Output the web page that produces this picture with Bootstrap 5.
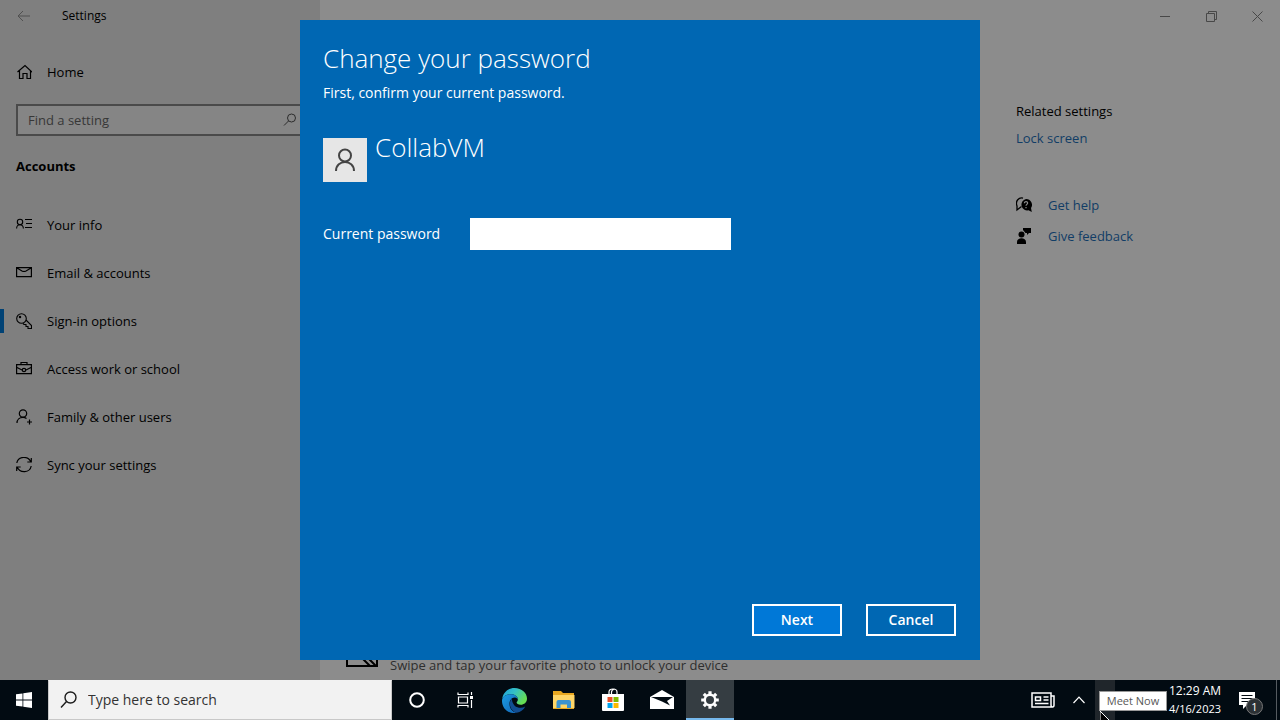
<!DOCTYPE html>
<html lang="en">
<head>
<meta charset="utf-8">
<meta name="viewport" content="width=device-width, initial-scale=1">
<title>Settings</title>
<link href="https://cdn.jsdelivr.net/npm/bootstrap@5.3.0/dist/css/bootstrap.min.css" rel="stylesheet">
<style>
  body { font-family: "Open Sans", "Noto Sans", sans-serif; font-size: 13px; line-height: 20px; color: #000; background: #8c8c8c; }
  svg { display: block; flex: none; }
  button { color: inherit; }
  a { text-decoration: none; }

  /* Settings window */
  .side-pane { width: 320px; flex: none; background: #7f7f7f; }
  .title-row { height: 32px; font-size: 12px; }
  .plain-btn { background: none; border: 0; padding: 0; }
  .back-btn { margin-left: 17px; margin-right: 31px; }
  .win-btn { width: 46px; height: 32px; color: #484848; }
  .find-box { height: 32px; border: 2px solid #4a4a4a; background: #858585; padding: 0 5px 0 10px; }
  .find-box input { background: none; border: 0; outline: 0; min-width: 0; padding: 0; color: #000; }
  .find-box input::placeholder { color: #373737; opacity: 1; }
  .side-head { font-size: 13px; line-height: 20px; font-weight: 700; margin: 20px 16px 25px; }
  .side-link { height: 48px; padding-left: 16px; gap: 15px; color: #000; position: relative; }
  .side-link.active::before { content: ""; position: absolute; left: 0; top: 12px; width: 4px; height: 24px; background: #004275; }
  .related { width: 264px; flex: none; padding-top: 69px; }
  .related a { color: #113d66; }
  .related .lock-link { margin: 7px 0 47px; }
  .related .help-link { margin-bottom: 11px; }
  .option-row { padding: 0 0 5px 26px; gap: 12px; color: #2e2e2e; }

  /* Password dialog */
  .dialog-layer { inset: 0; padding: 20px; }
  .pw-dialog { width: 680px; max-width: 100%; background: #0067b3; color: #fff; padding: 20px 24px 24px 23px; font-size: 14px; }
  .pw-dialog h1, .user-name { font-size: 26px; line-height: 36px; font-weight: 300; margin: 0; }
  .pw-dialog p { margin: 7px 0 26px; }
  .user-row { margin-bottom: 36px; }
  .avatar { width: 44px; height: 44px; background: #e6e6e6; margin-top: 9px; }
  .pw-label { width: 147px; }
  .pw-input { width: 261px; height: 32px; border: 0; border-radius: 0; background: #fff; padding: 4px 8px; }
  .dlg-btn { width: 90px; height: 32px; border: 2px solid #fff; border-radius: 0; color: #fff; font-size: 14px; font-weight: 600; line-height: 20px; padding: 0; background: #0067b3; }
  .dlg-btn.go { background: #0078d7; }

  /* Taskbar */
  .taskbar { height: 40px; background: #020b12; color: #fff; flex: none; }
  .task-btn { width: 49px; height: 40px; display: flex; align-items: center; justify-content: center; flex: none; }
  .task-btn.start { width: 48px; }
  .task-btn.current { width: 48px; background: #353d42; border-bottom: 2px solid #76b9ed; padding-top: 2px; }
  .task-search { width: 344px; background: #f2f2f2; border: 1px solid #c8c8c8; border-top-color: #f2f2f2; padding-left: 11px; gap: 10px; }
  .task-search input { background: none; border: 0; outline: 0; font-size: 14px; min-width: 0; color: #222; }
  .task-search input::placeholder { color: #333; opacity: 1; }
  .tray-btn { width: 32px; height: 40px; }
  .clock { font-size: 12px; line-height: 18px; text-align: center; width: 60px; margin-left: 50px; white-space: nowrap; }
  .clock .day { font-size: 11px; }
  .meet { width: 20px; height: 40px; background: #20262b; position: relative; }
  .tip { position: absolute; left: 4px; top: 11px; width: 68px; height: 20px; background: #fff; border: 1px solid #999; color: #575757; font-size: 11px; line-height: 18px; text-align: center; white-space: nowrap; }
  .pointer { position: absolute; left: 5px; top: 31px; }
  .note { position: relative; width: 44px; height: 40px; }
  .note-count { position: absolute; left: 21px; top: 18px; width: 17px; height: 17px; border: 1px solid #777; border-radius: 50%; background: #2c3135; font-size: 11px; line-height: 15px; text-align: center; }
  .edge-strip { width: 4px; margin-left: 7px; border-left: 1px solid #555b60; height: 40px; }
</style>
</head>
<body class="d-flex flex-column min-vh-100">

<div class="position-relative d-flex flex-grow-1">
  <aside class="side-pane d-flex flex-column">
    <div class="title-row d-flex align-items-center">
      <button class="plain-btn back-btn" aria-label="Back">
        <svg width="14" height="12" fill="none" stroke="#505050"><path d="M13 6H1M6 1L1 6l5 5"/></svg>
      </button>
      <span>Settings</span>
    </div>
    <a href="#" class="side-link d-flex align-items-center mt-3 mb-1">
      <svg width="16" height="16" fill="none" stroke="#000" stroke-width="1.2"><path d="M1.500 8L9 1.500 16 8M3.500 6.500v8h3.500v-5h4v5h3.500v-8"/></svg>
      Home
    </a>
    <div class="find-box d-flex align-items-center mx-3 mt-1">
      <input type="search" class="flex-grow-1" placeholder="Find a setting" aria-label="Find a setting">
      <svg width="14" height="14" fill="none" stroke="#2c2c2c"><circle cx="8.500" cy="5" r="4"/><path d="M5.500 8L1 12.500"/></svg>
    </div>
    <h2 class="side-head" id="acc">Accounts</h2>
    <nav class="d-flex flex-column" aria-labelledby="acc">
      <a href="#" class="side-link d-flex align-items-center">
        <svg width="16" height="16" fill="none" stroke="#000" stroke-width="1.1"><circle cx="4" cy="5" r="2.700"/><path d="M.6 11.500c0-5 6.800-5 6.800 0M9 2.500h7M10 6.500h6M9 10.500h7"/></svg>
        Your info</a>
      <a href="#" class="side-link d-flex align-items-center">
        <svg width="16" height="16" fill="none" stroke="#000" stroke-width="1.200"><path d="M.6 2.600h14.800v9H.6zM1 3l5 3q2 1 4 0l5-3"/></svg>
        Email &amp; accounts</a>
      <a href="#" class="side-link active d-flex align-items-center" aria-current="page">
        <svg width="16" height="17" fill="none" stroke="#000" stroke-width="1.100"><circle cx="5.500" cy="5.500" r="4.800"/><circle cx="4" cy="4" r=".7"/><path d="M10 7l5.500 5.500v3h-3.500v-2h-2v-2H8l-1-1"/></svg>
        Sign-in options</a>
      <a href="#" class="side-link d-flex align-items-center">
        <svg width="16" height="16" fill="none" stroke="#000" stroke-width="1.200"><path d="M.6 3.600h14.800v9H.6zM5 3.500v-2h6v2M1 6.500l5 2.500M15 6.500L10 9"/><circle cx="8" cy="9" r="1.700"/></svg>
        Access work or school</a>
      <a href="#" class="side-link d-flex align-items-center">
        <svg width="16" height="17" fill="none" stroke="#000" stroke-width="1.200"><circle cx="7" cy="4.500" r="3.700"/><path d="M1 14c0-3.500 2.500-5.700 6-5.700 1.500 0 2.500.4 3.500 1.200M13.500 10.500v5M11 13h5"/></svg>
        Family &amp; other users</a>
      <a href="#" class="side-link d-flex align-items-center">
        <svg width="16" height="16" fill="none" stroke="#000" stroke-width="1.200"><path d="M.8 6C2 -1 12 -1.500 15 5M15.200 9C14 16 4 16.500 1 10M15.300 1v4h-4M.7 14v-4h4"/></svg>
        Sync your settings</a>
    </nav>
  </aside>

  <main class="d-flex flex-column flex-grow-1">
    <div class="title-row d-flex justify-content-end">
      <button class="plain-btn win-btn d-flex align-items-center justify-content-center" aria-label="Minimize"><svg width="10" height="10" stroke="currentColor"><path d="M0 5.500h10"/></svg></button>
      <button class="plain-btn win-btn d-flex align-items-center justify-content-center" aria-label="Restore"><svg width="11" height="11" fill="none" stroke="currentColor"><path d="M.5 2.500h8v8h-8zM2.500 2.500v-2h8v8h-2"/></svg></button>
      <button class="plain-btn win-btn d-flex align-items-center justify-content-center" aria-label="Close"><svg width="11" height="11" stroke="currentColor"><path d="M.5.5l10 10M10.500.5l-10 10"/></svg></button>
    </div>
    <div class="d-flex flex-grow-1">
      <div class="d-flex flex-column justify-content-end flex-grow-1">
        <div class="option-row d-flex align-items-end">
          <svg width="32" height="24" fill="none" stroke="#000" stroke-width="2" class="mb-2"><path d="M1 1h30v22H1zM12 11l12 12M18 11l12 12"/></svg>
          <span>Swipe and tap your favorite photo to unlock your device</span>
        </div>
      </div>
      <div class="related">
        <div>Related settings</div>
        <a href="#" class="d-block lock-link">Lock screen</a>
        <a href="#" class="help-link d-flex align-items-center gap-3">
          <svg width="16" height="16"><path d="M5.500 9.500L1 13v-4C-1 4 3 0 7 1.200" fill="none" stroke="#000" stroke-width="1.300"/><path d="M10 2a5.800 5.800 0 0 1 5 9l.8 4-3.300-1.700A5.700 5.700 0 1 1 10 2z"/><path d="M8.400 6.200c0-2.200 3.400-2 3.200 0-.1 1.200-1.600 1.200-1.600 2.600M10 10v1.200" fill="none" stroke="#8c8c8c" stroke-width="1.200"/></svg>
          Get help</a>
        <a href="#" class="d-flex align-items-center gap-3">
          <svg width="16" height="16"><circle cx="5.500" cy="6.500" r="3"/><path d="M1 16v-2c0-5 9-5 9 0v2zM7 0h8v5h-2l-2 2V5H9.500L7 2z"/></svg>
          Give feedback</a>
      </div>
    </div>
  </main>

  <div class="dialog-layer position-absolute d-flex justify-content-center">
    <form class="pw-dialog d-flex flex-column" role="dialog" aria-labelledby="dlg-title">
      <h1 id="dlg-title">Change your password</h1>
      <p>First, confirm your current password.</p>
      <div class="user-row d-flex gap-2">
        <div class="avatar d-flex align-items-center justify-content-center">
          <svg width="22" height="24" fill="none" stroke="#444" stroke-width="2"><circle cx="11" cy="7.500" r="6"/><path d="M2 23c0-12 18-12 18 0"/></svg>
        </div>
        <div class="user-name">CollabVM</div>
      </div>
      <div class="d-flex align-items-center">
        <label for="cur" class="pw-label">Current password</label>
        <input id="cur" type="password" class="pw-input">
      </div>
      <div class="d-flex justify-content-end gap-4 mt-auto">
        <button type="button" class="dlg-btn go">Next</button>
        <button type="button" class="dlg-btn">Cancel</button>
      </div>
    </form>
  </div>
</div>

<footer class="taskbar d-flex align-items-center">
  <button class="plain-btn task-btn start" aria-label="Start"><svg width="16" height="16" fill="#fff"><path d="M0 2.300L6.500 1.400v6.200H0zM7.300 1.300L16 0v7.600H7.300zM0 8.400h6.500v6.200L0 13.700zM7.300 8.400H16V16l-8.700-1.300z"/></svg></button>
  <div class="task-search d-flex align-items-center h-100">
    <svg width="18" height="18" fill="none" stroke="#1c1c1c" stroke-width="1.400"><circle cx="10.500" cy="6.500" r="5.500"/><path d="M6.500 10.500L1 16.500"/></svg>
    <input type="search" class="flex-grow-1 p-0" placeholder="Type here to search" aria-label="Type here to search">
  </div>
  <button class="plain-btn task-btn" aria-label="Cortana"><svg width="16" height="16" fill="none" stroke="#fff" stroke-width="2"><circle cx="8" cy="8" r="6.800"/></svg></button>
  <button class="plain-btn task-btn" aria-label="Task view"><svg width="18" height="16" fill="none" stroke="#fff" stroke-width="1.200"><path d="M1 .5v2h10v-2M1 15.500v-2h10v2M1.500 5h9v6h-9zM14.500 0v3M14.500 8v8"/><path d="M13 4h3v3h-3z" fill="#fff" stroke="none"/></svg></button>
  <button class="plain-btn task-btn" aria-label="Edge">
    <svg width="25" height="25" viewBox="0 0 24 24">
      <defs>
        <linearGradient id="eg" x1="0" y1="0" x2="1" y2=".5"><stop offset="0" stop-color="#1c9fe0"/><stop offset=".5" stop-color="#35c1c4"/><stop offset="1" stop-color="#66dd53"/></linearGradient>
        <linearGradient id="eb" x1="0" y1="0" x2="1" y2="1"><stop offset="0" stop-color="#1b9de2"/><stop offset="1" stop-color="#1163b5"/></linearGradient>
      </defs>
      <path d="M.2 10.500C1 4.500 6 0 12 0c7 0 12 5 12 10 0 4-3 6-6 6-2.500 0-4-1-4-2 0-.8 1.200-1.200 1.200-3C15.200 8 12 6 8.500 6 4 6 1 8.500.2 10.500z" fill="url(#eg)"/>
      <path d="M.1 11C1 8 4.500 6 8.500 6c3.500 0 6.700 2 6.700 5 0 0-1-1.800-3-1.800-3 0-5 2.800-5 6C7.200 20 10 23 14 23.800 6 25.500-.8 19 .1 11z" fill="url(#eb)"/>
      <path d="M9.500 10.200C6 13 7 21.500 14 23.800c4-.6 7-3 8.300-6-5 3-12.500.5-12.800-7.600z" fill="#124e92"/>
    </svg></button>
  <button class="plain-btn task-btn" aria-label="File Explorer"><svg width="22" height="20"><path d="M0 1h8l2 2h11v16H0z" fill="#e9a820"/><path d="M0 5h21.500v13H0z" fill="#ffd667"/><path d="M3.500 18v-6q0-2 2-2h10.500q2 0 2 2v6h-4v-3.500H7.500V18z" fill="#3b93d0"/></svg></button>
  <button class="plain-btn task-btn" aria-label="Store"><svg width="24" height="24"><path d="M1 6h22v16q0 1-1 1H2q-1 0-1-1z" fill="#fff"/><path d="M8 8V4q0-3 4-3t4 3v4M10.500 6V4q0-2 3-3" fill="none" stroke="#fff" stroke-width="1.200"/><path d="M6.500 9h5v5h-5z" fill="#e8502a"/><path d="M12.500 9h5v5h-5z" fill="#7fba00"/><path d="M6.500 15h5v5h-5z" fill="#00a4ef"/><path d="M12.500 15h5v5h-5z" fill="#fdb900"/></svg></button>
  <button class="plain-btn task-btn" aria-label="Mail"><svg width="24" height="20"><path d="M0 7L12 0l12 7v12H0z" fill="#fff"/><path d="M1 7h22l-6 4 3 4.500-8-4z" fill="#020b12"/></svg></button>
  <button class="plain-btn task-btn current" aria-label="Settings"><svg width="18" height="18" viewBox="-9 -9 18 18" fill="none" stroke="#fff"><circle r="5.200" stroke-width="2.400"/><g stroke-width="3.200"><path d="M0-8.800v3M0 8.800v-3M-8.800 0h3M8.800 0h-3"/><path d="M-6.200-6.200l2 2M6.200 6.200l-2-2M-6.200 6.200l2-2M6.200-6.200l-2 2"/></g></svg></button>

  <div class="d-flex align-items-center ms-auto">
    <svg width="24" height="16" fill="none" stroke="#fff" stroke-width="1.500"><path d="M20 1H1v14h20.500q1.500 0 1.500-2V4h-3zM20 4v9q0 2 1.500 2M12.500 5h5M12.500 8h5M4 11.500h13.500"/><path d="M4.500 5h5v3.500h-5z"/></svg>
    <button class="plain-btn tray-btn ms-2 d-flex align-items-center justify-content-center" aria-label="Show hidden icons"><svg width="12" height="8" fill="none" stroke="#fff" stroke-width="1.200"><path d="M.5 7L6 1.200 11.500 7"/></svg></button>
    <div class="meet">
      <div class="tip" role="tooltip">Meet Now</div>
      <svg class="pointer" width="12" height="9"><path d="M0 0l11 11H0z" fill="#000" stroke="#fff"/></svg>
    </div>
    <div class="clock"><div>12:29 AM</div><div class="day">4/16/2023</div></div>
    <div class="note"><svg width="44" height="40"><path d="M14 12h16v13h-8l-4 4v-4h-4z" fill="#fff"/><path d="M16.500 15.500h11M16.500 18.500h11M16.500 21.500h8" stroke="#020b12" fill="none"/></svg><span class="note-count">1</span></div>
    <div class="edge-strip"></div>
  </div>
</footer>
<script src="https://cdn.jsdelivr.net/npm/bootstrap@5.3.0/dist/js/bootstrap.bundle.min.js"></script>
</body>
</html>
